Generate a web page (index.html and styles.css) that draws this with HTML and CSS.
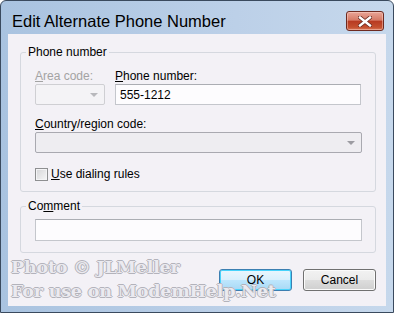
FILE: index.html
```html
<!DOCTYPE html>
<html lang="en">
<head>
    <meta charset="UTF-8">
    <title>Edit Alternate Phone Number</title>
    <link rel="stylesheet" href="styles.css">
</head>
<body>
    <div class="window">
        <div class="titlebar">
            <span class="title">Edit Alternate Phone Number</span>
            <button type="button" class="close">
                <svg width="14" height="11" viewBox="0 0 14 11">
                    <path d="M2 1.5 L12 9.5 M12 1.5 L2 9.5" stroke="#6a2a20" stroke-width="4" stroke-linecap="square"/>
                    <path d="M2 1.5 L12 9.5 M12 1.5 L2 9.5" stroke="#ffffff" stroke-width="2.4" stroke-linecap="square"/>
                </svg>
            </button>
        </div>

        <div class="client">
            <fieldset class="group">
                <legend>Phone number</legend>
                <div class="group-body">
                    <div class="row">
                        <div class="field area">
                            <label class="disabled"><u>A</u>rea code:</label>
                            <div class="combo disabled"><span class="arrow"></span></div>
                        </div>
                        <div class="field phone">
                            <label><u>P</u>hone number:</label>
                            <div class="textbox">555-1212</div>
                        </div>
                    </div>
                    <div class="field country">
                        <label><u>C</u>ountry/region code:</label>
                        <div class="combo"><span class="arrow"></span></div>
                    </div>
                    <div class="check">
                        <span class="box"></span>
                        <span><u>U</u>se dialing rules</span>
                    </div>
                </div>
            </fieldset>

            <fieldset class="group comment">
                <legend>Co<u>m</u>ment</legend>
                <div class="group-body">
                    <div class="textbox"></div>
                </div>
            </fieldset>

            <div class="buttons">
                <button type="button" class="btn default">OK</button>
                <button type="button" class="btn">Cancel</button>
            </div>
        </div>

        <div class="watermark">Photo © JLMeller<br>For use on ModemHelp.Net</div>
    </div>
</body>
</html>
```

FILE: styles.css
```css
body {
    margin: 0;
    font-family: "Liberation Sans", Arial, sans-serif;
    font-size: 12px;
    color: #000;
    background-color: #ffffff;
}

.window {
    position: relative;
    width: 394px;
    height: 313px;
    box-sizing: border-box;
    display: flex;
    flex-direction: column;
    padding: 0 7px 6px;
    border: 1px solid #3a4a5e;
    border-radius: 6px 6px 0 0;
    background: linear-gradient(to right, #a9c3e0, #bcd0e8 60%, #c6d8ec);
}

.titlebar {
    display: flex;
    justify-content: space-between;
    align-items: flex-start;
    height: 33px;
}

.title {
    margin: 10px 0 0 4px;
    font-size: 16.5px;
    line-height: 20px;
    color: #000;
}

.close {
    display: flex;
    justify-content: center;
    align-items: center;
    width: 38px;
    height: 20px;
    margin: 10px 2px 0 0;
    padding: 0;
    border: 1px solid #6e2a20;
    border-radius: 3px;
    background: linear-gradient(#e9a597, #d67a66 45%, #b83b22 52%, #c4502f 85%, #d9785a);
    box-shadow: inset 0 0 0 1px rgba(255, 220, 210, 0.45);
}

.client {
    flex: 1;
    display: flex;
    flex-direction: column;
    padding: 11px 10px 0 12px;
    background-color: #f3f1f6;
}

.group {
    margin: 0;
    padding: 0;
    border: 1px solid #d5d8df;
    border-radius: 3px;
}

.group legend {
    margin-left: 5px;
    padding: 0 2px;
    line-height: 14px;
}

.group-body {
    padding: 10px 13px 10px 14px;
}

.row {
    display: flex;
    gap: 10px;
}

.field label {
    display: block;
    line-height: 15px;
}

.area {
    width: 70px;
}

.phone {
    flex: 1;
    margin-right: 1px;
}

.country {
    margin-top: 12px;
}

.disabled {
    color: #a3a3a3;
}

.textbox {
    height: 21px;
    box-sizing: border-box;
    padding: 3px 4px 0;
    line-height: 15px;
    border: 1px solid #c4c6cc;
    border-top-color: #abadb3;
    background-color: #fdfcfe;
}

.combo {
    position: relative;
    height: 21px;
    box-sizing: border-box;
    border: 1px solid #a9a9b0;
    border-radius: 2px;
    background-color: #eeedf1;
}

.combo.disabled {
    border-color: #cfcfd3;
    background-color: #f4f3f6;
}

.arrow {
    position: absolute;
    right: 6px;
    top: 8px;
    border-left: 4px solid transparent;
    border-right: 4px solid transparent;
    border-top: 4px solid #9c9ca2;
}

.combo.disabled .arrow {
    border-top-color: #b8b8bc;
}

.check {
    display: flex;
    align-items: center;
    gap: 3px;
    margin-top: 15px;
    line-height: 13px;
}

.box {
    width: 13px;
    height: 13px;
    box-sizing: border-box;
    border: 1px solid #8e8f91;
    background: linear-gradient(135deg, #d5d5d8, #f6f6f8);
    box-shadow: inset 0 0 0 1px #f4f4f6;
}

.comment {
    margin-top: 7px;
}

.comment .group-body {
    padding: 6px 13px 11px 14px;
}

.comment .textbox {
    height: 22px;
}

.buttons {
    display: flex;
    justify-content: flex-end;
    gap: 11px;
    margin-top: 16px;
}

.btn {
    width: 73px;
    height: 22px;
    padding: 0;
    font-family: "Liberation Sans", Arial, sans-serif;
    font-size: 12px;
    color: #000;
    border: 1px solid #707070;
    border-radius: 3px;
    background: linear-gradient(#f2f2f2, #ebebeb 48%, #dddddd 52%, #cfcfcf);
    box-shadow: inset 0 0 0 1px #fbfbfb;
}

.btn.default {
    border-color: #3c7fb1;
    background: linear-gradient(#eaf6fd, #d9f0fc 48%, #bee6fd 52%, #a7d9f5);
    box-shadow: inset 0 0 0 1px #48d3fb;
}

.watermark {
    position: absolute;
    left: 10px;
    top: 254px;
    font-family: "DejaVu Serif", serif;
    font-weight: bold;
    font-size: 17.5px;
    line-height: 24px;
    letter-spacing: -0.2px;
    color: rgba(246, 245, 250, 0.85);
    text-shadow: 1px 0 0 #b3b3bb, -1px 0 0 #b3b3bb, 0 1px 0 #b3b3bb, 0 -1px 0 #b3b3bb;
    pointer-events: none;
}
```
